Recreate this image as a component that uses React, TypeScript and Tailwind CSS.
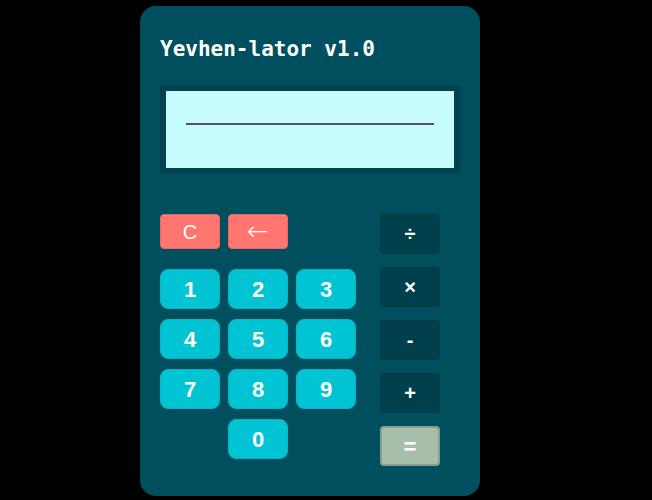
import React from 'react';

const digitRows = [['1', '2', '3'], ['4', '5', '6'], ['7', '8', '9']];
const operators = ['÷', '×', '-', '+'];

const DigitKey: React.FC<{ label: string }> = ({ label }) => (
  <button className="h-[40px] w-[60px] rounded-[8px] border border-[#0fb0c0] bg-[#00c4d4] text-[22px] font-bold text-white font-['Liberation_Sans',Arial,sans-serif]">
    {label}
  </button>
);

const App: React.FC = () => {
  return (
    <div className="min-h-[500px] w-[652px] bg-black pl-[140px] pt-[6px]">
      <div className="h-[490px] w-[340px] rounded-[16px] bg-[#004f5e] px-[20px] pt-[29px]">
        {/* Title */}
        <h1 className="text-[21px] leading-[28px] font-bold text-white font-['DejaVu_Sans_Mono',monospace]">
          Yevhen-lator v1.0
        </h1>

        {/* Display */}
        <div className="mt-[22px] w-[300px] bg-[#00434f] p-[6px] pb-[5px]">
          <div className="h-[77px] bg-[#c6fcfd] px-[20px] pt-[32px]">
            <div className="h-[2px] bg-[#555555]"></div>
          </div>
        </div>

        {/* Keys */}
        <div className="mt-[41px] flex gap-[24px]">
          <div className="flex w-[196px] flex-col">
            <div className="mb-[20px] flex gap-2">
              <button className="h-[35px] w-[60px] rounded-[4px] border border-[#e86a66] bg-[#ff7570] text-[20px] text-white font-['Liberation_Sans',Arial,sans-serif]">
                C
              </button>
              <button className="flex h-[35px] w-[60px] items-center justify-center rounded-[4px] border border-[#e86a66] bg-[#ff7570] pb-[2px] text-[26px] leading-none font-extralight text-white font-['DejaVu_Sans',sans-serif]">
                ←
              </button>
            </div>
            <div className="grid grid-cols-[60px_60px_60px] gap-x-2 gap-y-[10px]">
              {digitRows.flat().map((d) => (
                <DigitKey key={d} label={d} />
              ))}
              <div></div>
              <DigitKey label="0" />
            </div>
          </div>

          <div className="flex flex-col gap-[13px]">
            {operators.map((op) => (
              <button
                key={op}
                className="h-[40px] w-[60px] rounded-[4px] border border-[#003a45] bg-[#003f4c] text-[20px] font-bold text-white font-['Liberation_Sans',Arial,sans-serif]"
              >
                {op}
              </button>
            ))}
            <button className="h-[40px] w-[60px] rounded-[4px] border-2 border-[#8a9e8c] bg-[#a7beaa] text-[22px] font-bold text-white font-['Liberation_Sans',Arial,sans-serif]">
              =
            </button>
          </div>
        </div>
      </div>
    </div>
  );
};

export default App;
